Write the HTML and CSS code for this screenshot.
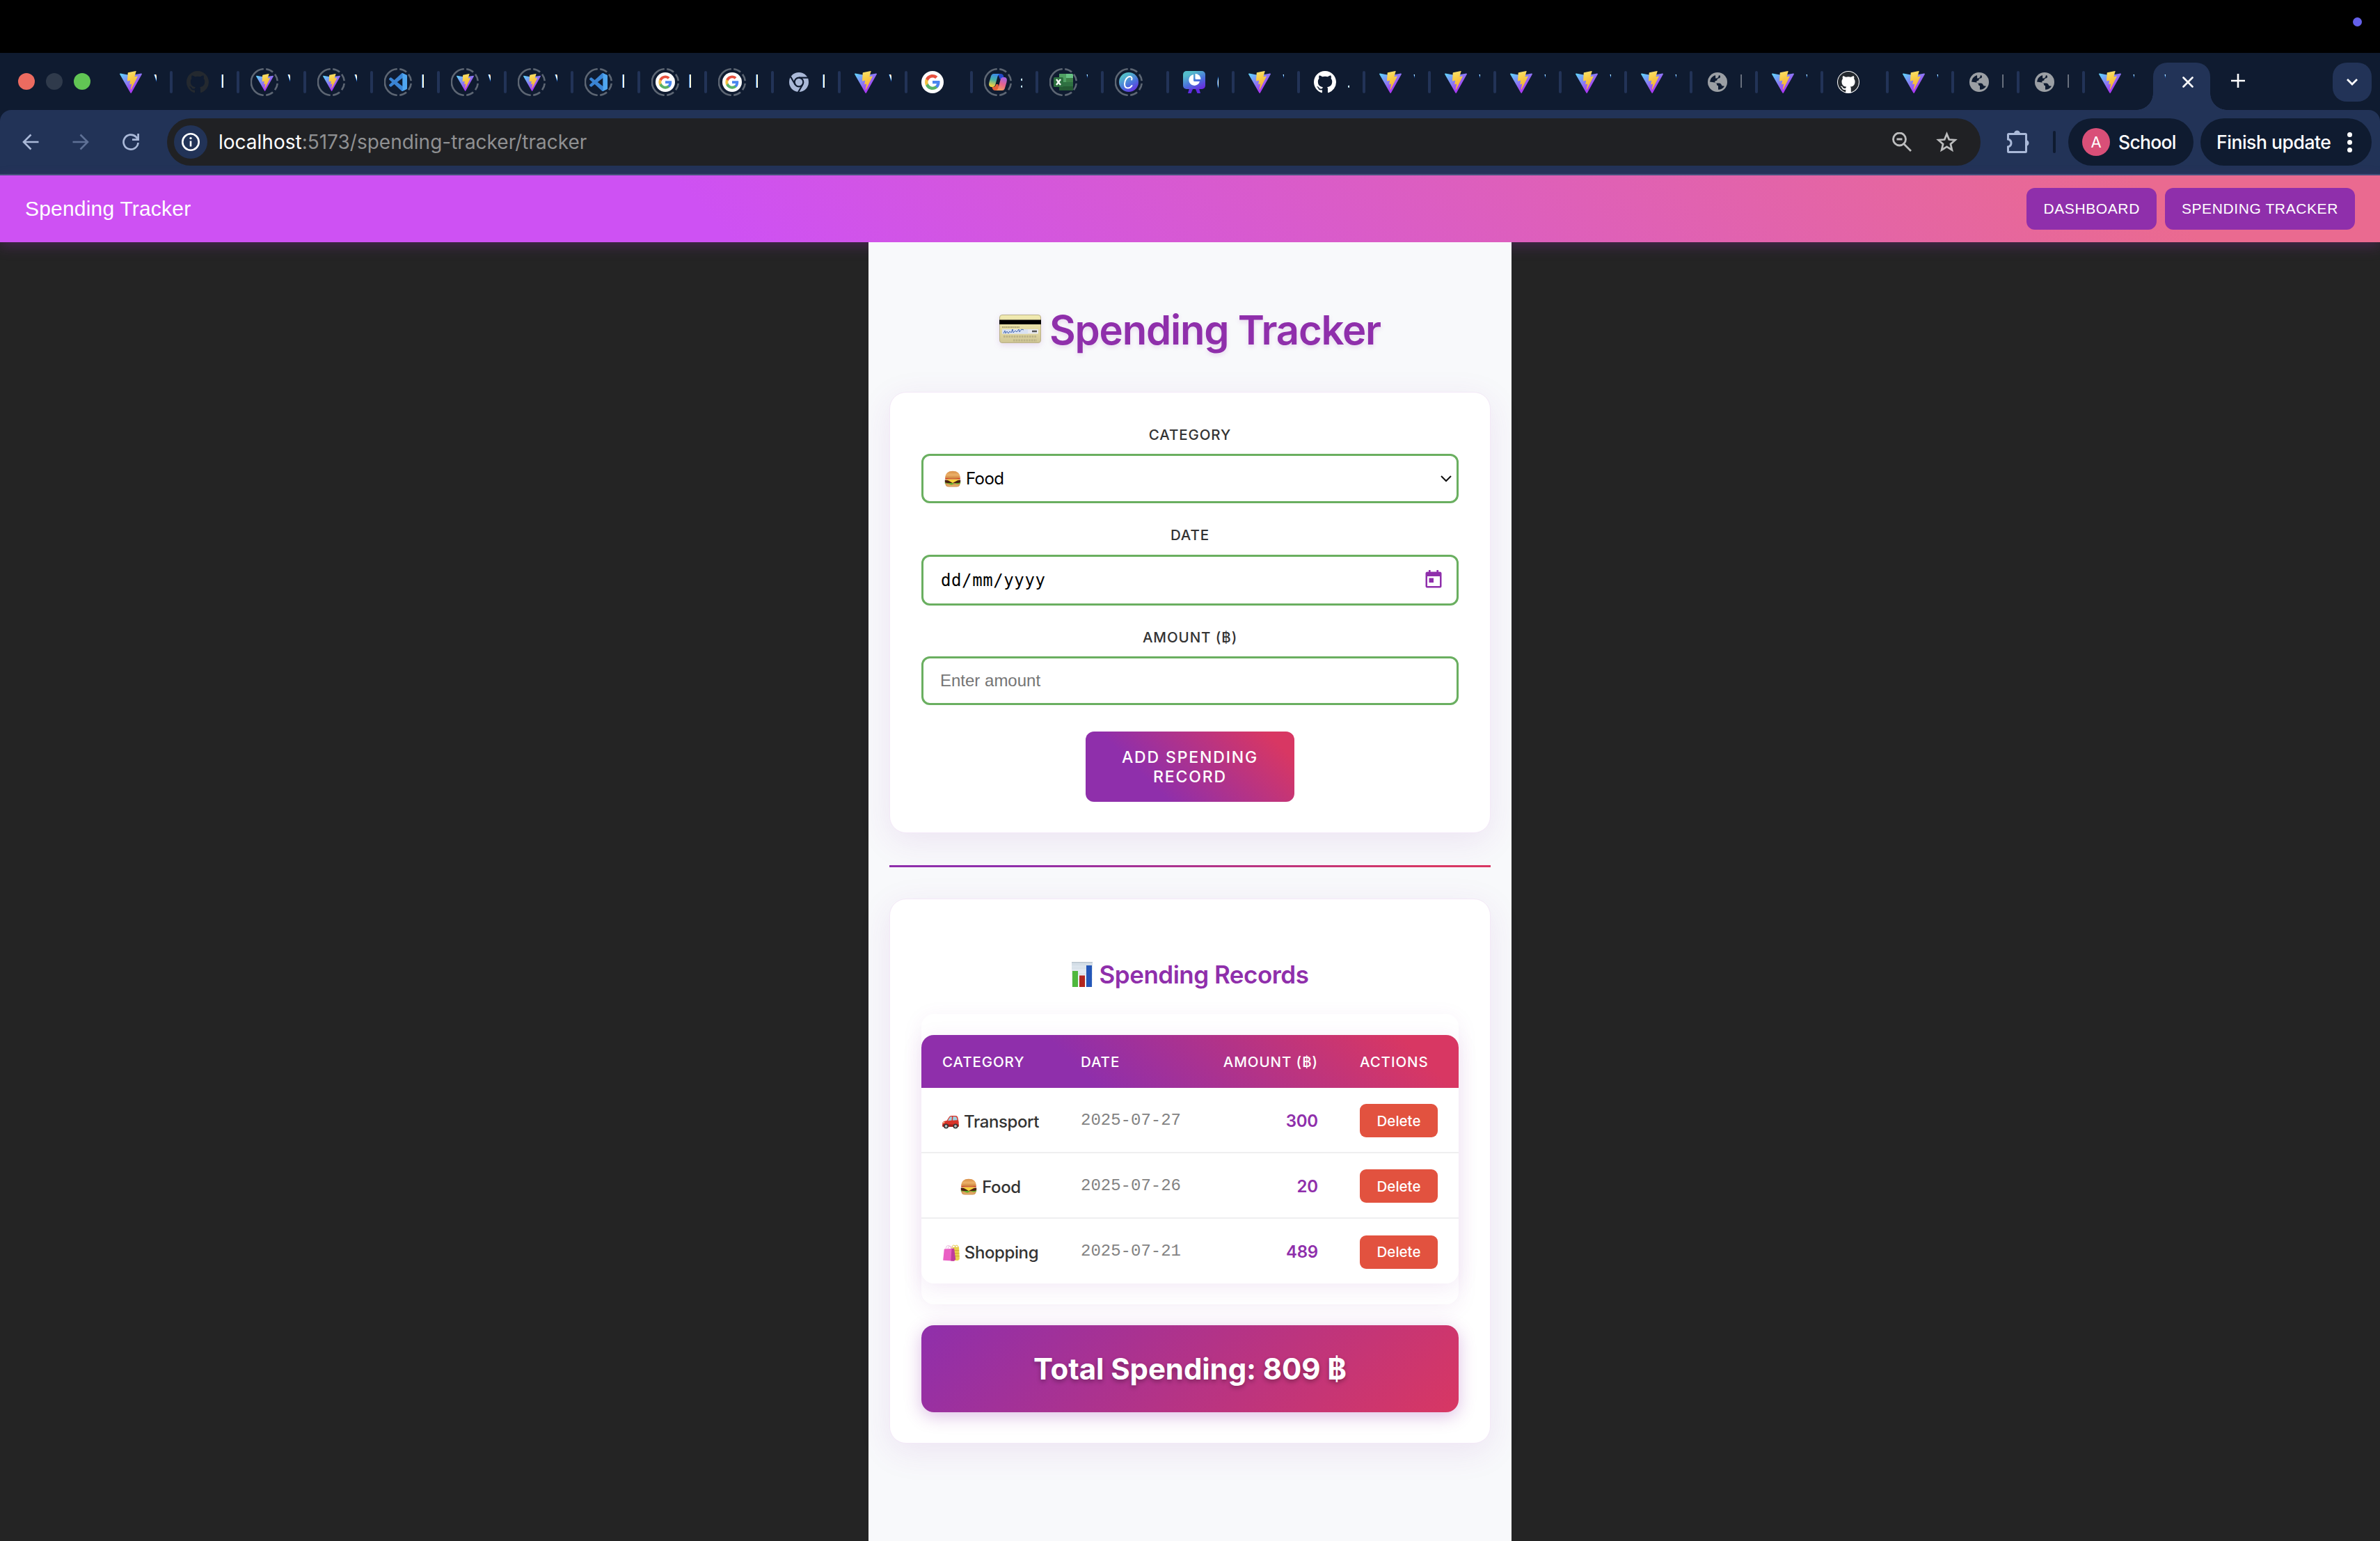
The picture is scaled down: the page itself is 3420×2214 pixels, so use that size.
FILE: index.html
```html
<!DOCTYPE html>
<html lang="en">
<head>
<meta charset="utf-8">
<title>Spending Tracker</title>
<link rel="stylesheet" href="styles.css">
</head>
<body>
<svg class="sprite" aria-hidden="true">
  <defs>
    <linearGradient id="vite-a" x1="0" y1="0.1" x2="0.6" y2="0.8"><stop offset="0" stop-color="#62cdfb"/><stop offset="1" stop-color="#a83cf2"/></linearGradient>
    <linearGradient id="vite-b" x1="0.4" y1="0" x2="0.6" y2="1"><stop offset="0" stop-color="#fbe067"/><stop offset="0.4" stop-color="#f8cb45"/><stop offset="1" stop-color="#f2ab3c"/></linearGradient>
    <linearGradient id="canva" x1="0.2" y1="0" x2="0.8" y2="1"><stop offset="0.15" stop-color="#53bccb"/><stop offset="0.6" stop-color="#4a6fdc"/><stop offset="1" stop-color="#6a2be0"/></linearGradient>
    <linearGradient id="cop-a" x1="0.5" y1="0" x2="0.3" y2="1"><stop offset="0" stop-color="#3b8be8"/><stop offset="0.45" stop-color="#47b3a8"/><stop offset="0.9" stop-color="#e8cf45"/></linearGradient>
    <linearGradient id="cop-b" x1="0.6" y1="0" x2="0.3" y2="1"><stop offset="0" stop-color="#a663e0"/><stop offset="0.5" stop-color="#e8648c"/><stop offset="1" stop-color="#f0a05c"/></linearGradient>
    <linearGradient id="card" x1="0" y1="0" x2="0" y2="1"><stop offset="0" stop-color="#f1ebb2"/><stop offset="0.5" stop-color="#e6dda4"/><stop offset="1" stop-color="#cfc595"/></linearGradient>
    <linearGradient id="bun" x1="0" y1="0" x2="0" y2="1"><stop offset="0" stop-color="#d98f48"/><stop offset="0.5" stop-color="#ebb169"/><stop offset="1" stop-color="#c97c38"/></linearGradient>
    <linearGradient id="chartbg" x1="0" y1="0" x2="0" y2="1"><stop offset="0" stop-color="#cbd6df"/><stop offset="0.2" stop-color="#dde6ee"/><stop offset="1" stop-color="#f1f5f8"/></linearGradient>
  </defs>
  <symbol id="vite" viewBox="0 0 256 257"><path fill="url(#vite-a)" d="M255.153 37.938L134.897 252.976c-2.483 4.44-8.862 4.466-11.382.048L.875 37.958c-2.746-4.814 1.371-10.646 6.827-9.67l120.385 21.517a6.537 6.537 0 0 0 2.322-.004l117.867-21.483c5.438-.991 9.574 4.796 6.877 9.62Z"/><path fill="url(#vite-b)" d="M185.432.063L96.44 17.501a3.268 3.268 0 0 0-2.634 3.014l-5.474 92.456a3.268 3.268 0 0 0 3.997 3.378l24.777-5.718c2.318-.535 4.413 1.507 3.936 3.838l-7.361 36.047c-.495 2.426 1.782 4.5 4.151 3.78l15.304-4.649c2.372-.72 4.652 1.36 4.15 3.788l-11.698 56.621c-.732 3.542 3.979 5.473 5.943 2.437l1.313-2.028l72.516-144.72c1.215-2.423-.88-5.186-3.54-4.672l-25.505 4.922c-2.396.462-4.435-1.77-3.759-4.114l16.646-57.705c.677-2.35-1.37-4.583-3.769-4.113Z"/></symbol>
  <symbol id="github" viewBox="0 0 16 16"><path fill="currentColor" d="M8 0C3.58 0 0 3.58 0 8c0 3.54 2.29 6.53 5.47 7.59.4.07.55-.17.55-.38 0-.19-.01-.82-.01-1.49-2.01.37-2.53-.49-2.69-.94-.09-.23-.48-.94-.82-1.13-.28-.15-.68-.52-.01-.53.63-.01 1.08.58 1.23.82.72 1.21 1.87.87 2.33.66.07-.52.28-.87.51-1.07-1.78-.2-3.64-.89-3.64-3.95 0-.87.31-1.59.82-2.15-.08-.2-.36-1.02.08-2.12 0 0 .67-.21 2.2.82.64-.18 1.32-.27 2-.27s1.36.09 2 .27c1.53-1.04 2.2-.82 2.2-.82.44 1.1.16 1.92.08 2.12.51.56.82 1.27.82 2.15 0 3.07-1.87 3.75-3.65 3.95.29.25.54.73.54 1.48 0 1.07-.01 1.93-.01 2.2 0 .21.15.46.55.38A8.01 8.01 0 0 0 16 8c0-4.42-3.58-8-8-8Z"/></symbol>
  <symbol id="vscode" viewBox="0 0 24 24"><path fill="#3a84d4" d="M23.15 2.587L18.21.21a1.494 1.494 0 0 0-1.705.29l-9.46 8.63-4.12-3.128a.999.999 0 0 0-1.276.057L.327 7.261A1 1 0 0 0 .326 8.74L3.899 12 .326 15.26a1 1 0 0 0 .001 1.479L1.65 17.94a.999.999 0 0 0 1.276.057l4.12-3.128 9.46 8.63a1.492 1.492 0 0 0 1.704.29l4.942-2.377A1.5 1.5 0 0 0 24 20.06V3.939a1.5 1.5 0 0 0-.85-1.352zm-5.146 14.861L10.826 12l7.178-5.448v10.896z"/><path fill="#4fa6f0" d="M18.21.21l4.94 2.377A1.5 1.5 0 0 1 24 3.94v16.12a1.5 1.5 0 0 1-.85 1.352l-4.94 2.377q-.5.2-1 0 .8-.3.8-1.3V1.5q0-1-.8-1.35.5-.15 1 .06z"/></symbol>
  <symbol id="google" viewBox="0 0 32 32"><circle cx="16" cy="16" r="16" fill="#fff"/><g transform="translate(4 4)"><path fill="#4a86f0" d="M22.56 12.25c0-.78-.07-1.53-.2-2.25H12v4.26h5.92c-.26 1.37-1.04 2.53-2.21 3.31v2.77h3.57c2.08-1.92 3.28-4.74 3.28-8.09z"/><path fill="#58b368" d="M12 23c2.97 0 5.46-.98 7.28-2.66l-3.57-2.77c-.98.66-2.23 1.06-3.71 1.06-2.86 0-5.29-1.93-6.16-4.53H2.18v2.84C3.99 20.53 7.7 23 12 23z"/><path fill="#f3c041" d="M5.84 14.09c-.22-.66-.35-1.36-.35-2.09s.13-1.43.35-2.09V7.07H2.18C1.43 8.55 1 10.22 1 12s.43 3.45 1.18 4.93l2.85-2.22.81-.62z"/><path fill="#e8513f" d="M12 5.38c1.62 0 3.06.56 4.21 1.64l3.15-3.15C17.45 2.09 14.97 1 12 1 7.7 1 3.99 3.47 2.18 7.07l3.66 2.84c.87-2.6 3.3-4.53 6.16-4.53z"/></g></symbol>
  <symbol id="chrome" viewBox="0 0 28 28"><circle cx="14" cy="14" r="14" fill="#aab9d8"/><g fill="none" stroke="#0f1b30" stroke-width="2.2"><circle cx="14" cy="14" r="6.3"/><path d="M14 7.7H27M8.5 17.2 2 6M19.5 17.2 13 28.5"/></g></symbol>
  <symbol id="copilot" viewBox="0 0 28 28"><path fill="#2348c8" d="M12 2h6q3 0 4 3l1.500 5H17l-2-5z"/><path fill="url(#cop-a)" d="M8 2h9q-2.500.5-3.500 4l-3 11q-1 4-4 4H4Q0 20 1.500 14L4 5.500Q5 2 8 2z"/><path fill="#e5603a" d="M16 26h-6q-3 0-4-3l-.6-2h2q3 0 4-4h3z"/><path fill="url(#cop-b)" d="M20 26h-9q2.500-.5 3.500-4l3-11q1-4 4-4H24q4 1 2.500 7L24 22.500Q23 26 20 26z"/></symbol>
  <symbol id="excel" viewBox="0 0 28 28"><path fill="#4f9f63" d="M8 2h18q2 0 2 2v20q0 2-2 2H8z"/><path fill="#68c184" d="M18 2h8q2 0 2 2v4H18z"/><path fill="#2f7041" d="M8 14h20v6H8z"/><path fill="#245a33" d="M8 20h20v4q0 2-2 2H8z"/><path fill="#3d8149" d="M18 8h10v6H18z"/><rect x="0" y="7" width="14" height="14" rx="1.500" fill="#2d7040"/><path stroke="#fff" stroke-width="2.200" d="M4 10l6 8M10 10l-6 8"/></symbol>
  <symbol id="canvac" viewBox="0 0 28 28"><circle cx="14" cy="14" r="14" fill="url(#canva)"/><path d="M18.200 10.500c1-2-.2-4.500-2.700-4.500-4 0-7.500 5.500-7.500 10.500 0 3.500 1.800 6 4.800 6 2.600 0 4.400-1.500 5.700-3.500" fill="none" stroke="#fff" stroke-width="2" stroke-linecap="round"/></symbol>
  <symbol id="present" viewBox="0 0 32 32"><path d="M9 25l-2 7h4.500L14 26h4l2.500 6H25l-2-7z" fill="#5f2ce0"/><rect width="32" height="26" rx="5" fill="url(#canva)"/><path fill="#fff" d="M15 5v8.500q0 1.500 1.500 1.500h7.500A8 8 0 1 1 15 5z"/><path fill="#fff" d="M17.500 4a8 8 0 0 1 8 8h-6.500q-1.500 0-1.500-1.500z"/></symbol>
  <symbol id="globe" viewBox="0 0 28 28"><circle cx="14" cy="14" r="14" fill="#9b9fa4"/><path fill="#0f1b30" d="M11 4q-7 2.500-8 9.500l7 1q3 .5 3 3 0 1.500 2 1.800v5.500q6 0 9-5l-3.500-.5q-1.500-3.500-3.500-3.800h-5q-1.800 0-1.800-1.700 0-1.800 1.800-1.800 1.700-.2 1.700-2 .2-1.500 2-1.500 2.500-.2 2.300-3L17 4q-1 0-2 1.500-1.500 1.500-3 1-1.500-.5-1-2.500z"/><path fill="#9b9fa4" d="M11.500 4.500h4q.5 2-1.500 3.500-1 .8-3 .3z"/></symbol>
  <symbol id="ring" viewBox="0 0 40 40"><g fill="none" stroke="#5d6673" stroke-width="2.600"><path d="M17.700 1.300a18.800 18.800 0 0 0 0 37.400" stroke-linecap="round"/><path d="M20 1.200a18.800 18.800 0 0 1 0 37.600" pathLength="180" stroke-dasharray="0 7 33 13 31 12 31 13 33 7"/></g></symbol>
  <symbol id="burger" viewBox="0 0 24 24"><path fill="#c88a4a" d="M1.500 17.500h21v2.500q-1 3.500-5 3.500h-11q-4 0-5-3.500z"/><path fill="#e2a864" d="M2 19.500h20q-1 3-4.500 3.200h-11Q3 22.500 2 19.500z"/><path fill="#63b12e" d="M.8 16.500q3 2 5.500.8t5.500.8 5.700-.6 5.700-1v2q-3 1.500-5.500.8t-5.700.6-5.700-.6-5.500-.4z"/><path fill="#4a2010" d="M.8 13.500h22.400v3q-1.200 1.500-4 1.500H4.800q-3 0-4-1.500z"/><path fill="#f6d33c" d="M1 12.500h22l-4.500 2-6.500 3.500L6 14.500z"/><path fill="#cf3a22" d="M1.200 10.500h21.600v2H1.200z"/><path fill="url(#bun)" d="M1 10.500Q1.500.8 12 .8T23 10.500q-5 1.300-11 1.300T1 10.500z"/></symbol>
  <symbol id="car" viewBox="0 0 24 20"><path fill="#d9342a" d="M.3 11q.4-1.500 3-2.200L6.500 8 10 2.500Q10.800 1 13 .9h6q2.500 0 3.200 2L23.500 9q.4 1 .2 3.500v3.200q0 1-1 1H1.300q-1 0-1-1z"/><path fill="#9fd0e0" d="M7.800 8.200l3-5q.6-1 2-1H14l-.5 5.500zM15.500 2.200h3q1.800 0 2.300 1.500l1 3.500-6.800.5z"/><path fill="#a81f1a" d="M.3 13.500h23.400v2.800q0 .7-1 .7H1.300q-1 0-1-.7z"/><path fill="#f7e6a0" d="M1 10.500l2.500-.8-.4 1.600-2.300.5z"/><circle cx="5.500" cy="16" r="3.500" fill="#333"/><circle cx="5.500" cy="16" r="1.900" fill="#b7bcc0"/><circle cx="19" cy="16" r="3.500" fill="#333"/><circle cx="19" cy="16" r="1.900" fill="#b7bcc0"/></symbol>
  <symbol id="bags" viewBox="0 0 24 24"><path fill="none" stroke="#e3c43f" stroke-width="1" d="M13 5.500Q13 1 15.500 1T18 4.500M17 4Q18 .6 20 1t2 3.500"/><path fill="#e9cf4c" d="M11 4l12-.5.8 17.500-2 2H11z"/><path fill="#cfae30" d="M11 8h12.200v1.200H11zm0 4h12.400v1.200H11zm0 4h12.600v1.200H11z"/><path fill="none" stroke="#eec3e2" stroke-width="1.100" d="M4 7q.5-5.500 3.500-5.500T12 7M7 6Q8 2 10.500 2.500T14 7"/><path fill="#ea5fc4" d="M1.800 6.500l14.200-.7.8 18L.2 22.800z"/><path fill="#bf3b9c" d="M12.500 6l3.500-.2 2.300 15.700-3 2.300-4-.2z"/></symbol>
  <symbol id="creditcard" viewBox="0 0 60 42"><rect x=".5" y=".5" width="59" height="40" rx="3.500" fill="url(#card)" stroke="#b9b08a"/><path fill="#000" d="M0 7.500h60v6.500H0z"/><path fill="#e9eaf0" d="M4 21h52v6.500H4z"/><path fill="#d9e2f2" d="M4 21h37v6.500H4z"/><path d="M4 18h25" stroke="#77714f" stroke-width="1.200" stroke-dasharray="2 .6"/><path d="M6 27l2-4 1 4 2-3 2 3 2-3 2 2 2-5 1 5 3-3 2 2 3-4 1 4 3-4 3 1" fill="none" stroke="#4668b4" stroke-width="1"/><path d="M47 24h7" stroke="#555" stroke-width="2.500"/><path d="M6 31.500h48M20 37h34" stroke="#bcb389" stroke-width="3" stroke-dasharray="2.500 1.200"/></symbol>
  <symbol id="chart" viewBox="0 0 30 36"><rect width="30" height="36" fill="url(#chartbg)"/><path d="M0 .5h30" stroke="#b4c0ca"/><path d="M0 9h30M0 17h30M0 25h30" stroke="#cfd9e1" stroke-width=".8"/><rect x="1" y="13" width="8" height="23" fill="#4fb83e"/><rect x="11" y="19.500" width="8" height="16.500" fill="#b3261e"/><rect x="21" y="5" width="8" height="31" fill="#2457b8"/></symbol>
</svg>

<div class="menubar"><span class="menubar-dot"></span></div>

<header class="browser">
  <div class="tabstrip">
    <div class="lights"><i class="light red"></i><i class="light gray"></i><i class="light green"></i></div>
    <div class="tabs" id="tabs"></div>
    <div class="tab-active">
      <span class="frag narrow">V</span>
      <svg class="close" viewBox="0 0 16 16"><path d="M1.500 1.500l13 13M14.500 1.500l-13 13" stroke="#fff" stroke-width="2.600" stroke-linecap="round"/></svg>
    </div>
    <svg class="newtab" viewBox="0 0 20 20"><path d="M10 0v20M0 10h20" stroke="#fff" stroke-width="2.600"/></svg>
    <div class="tabsearch"><svg viewBox="0 0 18 12"><path d="M2 2l7 7 7-7" fill="none" stroke="#fff" stroke-width="2.800"/></svg></div>
  </div>
  <div class="toolbar">
    <svg class="nav" viewBox="0 0 24 24"><path d="M23.500 12H2M12.500 1.500L2 12l10.500 10.500" fill="none" stroke="#aab9d8" stroke-width="2.600"/></svg>
    <svg class="nav" viewBox="0 0 24 24"><path d="M.5 12H22M11.500 1.500L22 12 11.500 22.500" fill="none" stroke="#5f7196" stroke-width="2.600"/></svg>
    <svg class="nav" viewBox="0 0 24 24"><path d="M22.500 13a10.500 10.500 0 1 1-3.200-8.500L22.500 8" fill="none" stroke="#aab9d8" stroke-width="2.700"/><path d="M22.600 0v8.600H14" fill="none" stroke="#aab9d8" stroke-width="2.700"/></svg>
    <div class="omnibox">
      <span class="site"><svg viewBox="0 0 26 26"><circle cx="13" cy="13" r="11.700" fill="none" stroke="#fff" stroke-width="2.600"/><path d="M13 11.500v8" stroke="#fff" stroke-width="2.600"/><circle cx="13" cy="7.600" r="1.700" fill="#fff"/></svg></span>
      <span class="url"><b>localhost</b>:5173/spending-tracker/tracker</span>
      <svg class="mag" viewBox="0 0 28 28"><circle cx="10.500" cy="10" r="9" fill="none" stroke="#bdbebf" stroke-width="2.800"/><path d="M17 17l10 10M6.500 10h8" stroke="#bdbebf" stroke-width="2.800"/></svg>
      <svg class="star" viewBox="0 0 31 30"><path d="M15.500 3.500l3.300 8 8.700.7-6.600 5.700 2 8.500-7.400-4.500-7.400 4.500 2-8.500-6.600-5.700 8.700-.7z" fill="none" stroke="#bdbebf" stroke-width="2.700"/></svg>
    </div>
    <svg class="puzzle" viewBox="0 0 34 34"><path d="M4.500 5.500h24a1 1 0 0 1 1 1v24a1 1 0 0 1-1 1h-24a1 1 0 0 1-1-1v-6.500q4.500-1.200 4.500-5.500t-4.500-5.500V6.500a1 1 0 0 1 1-1z" fill="none" stroke="#aab9d8" stroke-width="3"/><path d="M12 5a4.500 4.500 0 0 1 9 0zM29 14a4.500 4.500 0 0 1 0 9z" fill="#aab9d8"/></svg>
    <i class="divider"></i>
    <div class="pill profile"><span class="avatar">A</span><span class="pilltext school">School</span></div>
    <div class="pill update"><span class="pilltext">Finish update</span><span class="dots"><i></i><i></i><i></i></span></div>
  </div>
</header>

<nav class="appbar">
  <div class="brand">Spending Tracker</div>
  <a class="navbtn">DASHBOARD</a>
  <a class="navbtn">SPENDING TRACKER</a>
</nav>

<main class="page">
  <h1><svg><use href="#creditcard"/></svg><span>Spending Tracker</span></h1>
  <section class="card form">
    <label>CATEGORY</label>
    <div class="field select"><svg class="emoji"><use href="#burger"/></svg><span>Food</span><svg class="chev" viewBox="0 0 16 10"><path d="M1 1l7 7 7-7" fill="none" stroke="#111" stroke-width="2"/></svg></div>
    <label class="datelabel">DATE</label>
    <div class="field date"><span>dd/mm/yyyy</span><svg class="cal" viewBox="0 0 24 26"><path fill="#8f2fab" d="M3 2.500h2V0h2.600v2.500h8.800V0H19v2.500h2q2.500 0 2.500 2.500v18q0 2.500-2.500 2.500H3Q.5 25.500.5 23V5Q.5 2.500 3 2.500zM3 9v14h18V9zM5.500 11.500H12V18H5.500z" fill-rule="evenodd"/></svg></div>
    <label>AMOUNT (฿)</label>
    <div class="field amount"><span>Enter amount</span></div>
    <button class="add">ADD SPENDING<br>RECORD</button>
  </section>
  <hr>
  <section class="card records">
    <h2><svg><use href="#chart"/></svg><span>Spending Records</span></h2>
    <div class="tablewrap">
      <table>
        <colgroup><col class="c1"><col class="c2"><col class="c3"><col class="c4"></colgroup>
        <thead><tr><th>CATEGORY</th><th>DATE</th><th class="r">AMOUNT (฿)</th><th>ACTIONS</th></tr></thead>
        <tbody>
          <tr><td><div class="cat"><svg class="emoji car"><use href="#car"/></svg><span>Transport</span></div></td><td class="when">2025-07-27</td><td class="num">300</td><td><button class="del">Delete</button></td></tr>
          <tr><td><div class="cat"><svg class="emoji"><use href="#burger"/></svg><span>Food</span></div></td><td class="when">2025-07-26</td><td class="num">20</td><td><button class="del">Delete</button></td></tr>
          <tr><td><div class="cat"><svg class="emoji"><use href="#bags"/></svg><span>Shopping</span></div></td><td class="when">2025-07-21</td><td class="num">489</td><td><button class="del">Delete</button></td></tr>
        </tbody>
      </table>
    </div>
    <div class="total">Total Spending: 809 ฿</div>
  </section>
</main>
<script src="tabs.js"></script>
</body>
</html>
```
FILE: styles.css
```css
* { box-sizing: border-box; }
html, body { height: 100%; }
body { margin: 0; background: #242424; font-family: Inter, "Liberation Sans", sans-serif; color: #333; overflow: hidden; }
svg { display: block; flex: none; }
i { font-style: normal; }
.sprite { position: absolute; width: 0; height: 0; }

.menubar { height: 76px; background: #000; display: flex; justify-content: flex-end; padding: 25px 26px 0 0; }
.menubar-dot { width: 13px; height: 13px; border-radius: 50%; background: #6460ea; }

/* Browser chrome */
.browser { background: #0f1b30; }
.tabstrip { height: 82px; display: flex; align-items: flex-start; }
.lights { display: flex; gap: 16px; padding: 29px 0 0 26px; width: 150px; flex: none; }
.light { width: 24px; height: 24px; border-radius: 50%; }
.red { background: #ec6b60; }
.gray { background: #2f3a4b; }
.green { background: #61c554; }
.tabs { display: flex; height: 82px; }
.tab { width: 94px; height: 84px; display: flex; align-items: center; padding-left: 18px; flex: none; }
.tab.wide { width: 96px; }
.fav { width: 40px; height: 40px; display: grid; place-items: center; flex: none; }
.fav > * { grid-area: 1 / 1; }
.s32 { width: 32px; height: 32px; }
.s28 { width: 28px; height: 28px; }
.s26 { width: 26px; height: 26px; }
.s25 { width: 25px; height: 25px; }
.s40 { width: 40px; height: 40px; }
.frag { display: block; width: 4px; height: 24px; margin: -2px 0 0 13px; overflow: hidden; color: #fff; font-size: 25px; line-height: 24px; }
.frag.stem { text-indent: -.500px; }
.frag.narrow { width: 2px; }
.frag.narrow.stem { text-indent: -2px; }
.frag.faint { opacity: .4; }
.sep { width: 4px; height: 32px; border-radius: 2px; background: #223357; margin: 0 -2px 0 auto; }
.tab-active { position: relative; width: 82px; height: 68px; margin: 14px 0 0 6px; background: #223357; border-radius: 20px 20px 0 0; display: flex; align-items: center; padding-left: 2px; }
.tab-active::before, .tab-active::after { content: ""; position: absolute; bottom: 0; width: 24px; height: 24px; }
.tab-active::before { left: -24px; background: radial-gradient(circle at 0 0, transparent 23.500px, #223357 24px); }
.tab-active::after { right: -24px; background: radial-gradient(circle at 100% 0, transparent 23.500px, #223357 24px); }
.tab-active .frag { margin: -14px 0 0 14px; }
.close { width: 16px; height: 16px; margin: -12px 0 0 24px; }
.newtab { width: 20px; height: 20px; margin: 30px 0 0 30px; }
.tabsearch { width: 56px; height: 56px; border-radius: 20px; background: #223357; margin: 14px 12px 0 auto; display: grid; place-items: center; }
.tabsearch svg { width: 18px; height: 12px; }

.toolbar { height: 94px; background: #223357; border-bottom: 2px solid #42547a; border-radius: 16px 16px 0 0; display: flex; align-items: center; padding: 0 12px 0 32px; }
.nav { width: 24px; height: 24px; margin-right: 48px; }
.omnibox { width: 2606px; height: 68px; border-radius: 34px; background: #202124; margin-left: -8px; display: flex; align-items: center; padding: 0 33px 0 10px; }
.site { width: 48px; height: 48px; border-radius: 50%; background: #223357; display: grid; place-items: center; }
.site svg { width: 26px; height: 26px; }
.url { margin-left: 16px; font-size: 28px; color: #8f9092; white-space: nowrap; }
.url b { font-weight: 400; color: #fff; }
.mag { width: 28px; height: 28px; margin-left: auto; }
.star { width: 31px; height: 30px; margin-left: 35px; }
.puzzle { width: 34px; height: 34px; margin-left: 36px; }
.divider { width: 4px; height: 32px; border-radius: 2px; background: #0f1b30; margin: 0 18px 0 34px; }
.pill { height: 68px; border-radius: 34px; background: #0f1b30; color: #fff; display: flex; align-items: center; font-size: 26.500px; font-weight: 500; flex: none; white-space: nowrap; letter-spacing: -.450px; }
.profile { width: 180px; padding-left: 20px; }
.school { letter-spacing: -.700px; }
.avatar { width: 40px; height: 40px; border-radius: 50%; background: #d94f78; font-size: 22px; line-height: 40px; text-align: center; font-weight: 400; margin-right: 12px; letter-spacing: 0; }
.update { width: 246px; margin-left: 10px; padding-left: 23px; }
.dots { display: grid; gap: 4px; margin: 0 28px 0 auto; }
.dots i { width: 7px; height: 7px; border-radius: 50%; background: #fff; }

/* App bar */
.appbar { height: 96px; display: flex; align-items: center; gap: 12px; padding: 0 36px; background: linear-gradient(45deg, #ce51f3 30%, #ea6a90 90%); box-shadow: 0 6px 18px rgba(142, 46, 168, .3); font-family: "Liberation Sans", Arial, sans-serif; color: #fff; }
.brand { font-size: 30px; letter-spacing: .200px; margin-right: auto; }
.navbtn { height: 60px; padding: 0 24px; border-radius: 12px; background: #8f2fab; font-size: 21px; line-height: 60px; letter-spacing: .600px; }

/* Page column */
.page { width: 924px; height: 1866px; margin: 0 auto; padding: 90px 30px 0; background: #f8f9fb; }
h1, h2 { margin: 0; color: #8f2fab; font-weight: 600; display: flex; justify-content: center; align-items: center; white-space: nowrap; }
h1 { height: 72px; font-size: 58px; line-height: 72px; margin-bottom: 53px; gap: 12px; text-shadow: 0 3px 6px rgba(142, 46, 168, .15); letter-spacing: -1.200px; }
h1 svg { width: 60px; height: 42px; margin-top: -3px; filter: drop-shadow(0 3px 4px rgba(142, 46, 168, .15)); }
.card { background: #fff; border: 1px solid #f3e8f7; border-radius: 24px; box-shadow: 0 12px 48px rgba(142, 46, 168, .1); padding: 45px; }
.form { height: 634px; }
label { display: block; height: 31px; line-height: 31px; margin-bottom: 12px; text-align: center; font-size: 20.500px; font-weight: 550; letter-spacing: .900px; }
.datelabel { margin-bottom: 13px; }
.field { border: 3px solid #6aaf60; border-radius: 12px; display: flex; align-items: center; margin-bottom: 30px; font-size: 24px; color: #000; background: #fff; }
.select { height: 71px; padding: 0 7px 0 30px; letter-spacing: -.600px; }
.emoji { width: 24px; height: 24px; margin-right: 7px; }
.car { height: 20px; margin-top: 2px; }
.chev { width: 16px; height: 10px; margin-left: auto; }
.date { height: 73px; padding: 0 21px 0 25px; font-family: "DejaVu Sans Mono", monospace; letter-spacing: .600px; }
.cal { width: 24px; height: 26px; margin: -4px 0 0 auto; }
.amount { height: 70px; padding: 0 24px; font-family: "Liberation Sans", Arial, sans-serif; color: #757575; }
button { border: 0; padding: 0; color: #fff; font-family: inherit; display: block; }
.add { width: 300px; height: 101px; margin: 38px auto 0; border-radius: 12px; background: linear-gradient(45deg, #8f2fab 30%, #d83763 90%); font-size: 23px; line-height: 28px; font-weight: 550; letter-spacing: 1.850px; }
hr { height: 3px; border: 0; margin: 46px 0 45px; background: linear-gradient(90deg, #8f2fab 20%, #d83763 90%); }
.records { height: 783px; }
h2 { height: 44px; margin: 41px 0 35px; font-size: 35px; line-height: 44px; gap: 10px; letter-spacing: -.500px; }
h2 svg { width: 30px; height: 36px; }
.tablewrap { padding: 30px 0; border-radius: 18px; box-shadow: 0 6px 30px rgba(142, 46, 168, .08); }
table { width: 772px; table-layout: fixed; border-collapse: separate; border-spacing: 0; border-radius: 18px; overflow: hidden; background: #fff; box-shadow: 0 6px 30px rgba(142, 46, 168, .1); }
.c1 { width: 199px; } .c2 { width: 202px; } .c3 { width: 199px; } .c4 { width: 172px; }
thead { background: linear-gradient(45deg, #8f2fab 30%, #d83763 90%); }
th { height: 76px; padding: 0 0 0 30px; text-align: left; color: #fff; font-size: 20.500px; font-weight: 550; letter-spacing: .900px; white-space: nowrap; }
th.r { text-align: right; padding: 0 30px 0 0; }
td { height: 94px; padding: 2px 30px 0; border-bottom: 2px solid #efeff0; white-space: nowrap; }
tr:last-child td { border-bottom: 0; height: 93px; }
.cat { display: flex; align-items: center; justify-content: center; font-size: 24px; font-weight: 500; margin-top: 2px; letter-spacing: -.400px; }
.when { padding: 0 0 0 30px; font-family: "Liberation Mono", "Courier New", monospace; font-size: 24px; color: #838383; }
.num { text-align: right; color: #8f2fab; font-size: 24px; font-weight: 600; letter-spacing: -.200px; }
.del { width: 112px; height: 48px; border-radius: 9px; background: #e2523f; font-size: 20.500px; font-weight: 500; }
.total { height: 125px; margin-top: 30px; border-radius: 18px; background: linear-gradient(135deg, #8f2fab, #d83763); box-shadow: 0 6px 24px rgba(142, 46, 168, .3); color: #fff; font-size: 42px; font-weight: 700; line-height: 125px; text-align: center; text-shadow: 0 3px 6px rgba(0, 0, 0, .3); letter-spacing: -.100px; }
```
FILE: tabs.js
```js
// Open tabs, in order: [icon, title, ring?, colour]
const open = [
  ['vite', 'V'], ['github', 'L', 0, '#24292f'], ['vite', 'V', 1], ['vite', 'V', 1], ['vscode', 'L', 1],
  ['vite', 'V', 1], ['vite', 'V', 1], ['vscode', 'L', 1], ['google', 'L', 1], ['google', 'L', 1],
  ['chrome', 'L'], ['vite', 'V'], ['google', ''], ['copilot', ':', 1], ['excel', 'V', 1], ['canvac', '', 1],
  ['present', '('], ['vite', 'V'], ['github', '.', 0, '#fff'], ['vite', 'V'], ['vite', 'V'], ['vite', 'V'],
  ['vite', 'V'], ['vite', 'V'], ['globe', 'L'], ['vite', 'V'], ['octo', ''], ['vite', 'V'], ['globe', 'L'],
  ['globe', 'L'], ['vite', 'V'],
];
document.getElementById('tabs').innerHTML = open.map(([icon, title, ring, color], i) => {
  const size = ring ? (icon === 'vite' ? 's25' : icon === 'vscode' ? 's26' : 's28') : (icon === 'chrome' || icon === 'globe' ? 's28' : 's32');
  const use = icon === 'octo'
    ? '<svg class="s32" viewBox="0 0 32 32"><circle cx="16" cy="16" r="16" fill="#fff"/><g color="#24292f"><use href="#github" x="1" y="1" width="30" height="30"/></g></svg>'
    : `<svg class="${size}"${color ? ` color="${color}"` : ''}><use href="#${icon}"/></svg>`;
  const frag = ['frag', i < 12 ? '' : 'narrow', title === 'V' ? '' : 'stem', icon === 'globe' ? 'faint' : ''].filter(Boolean).join(' ');
  return `<div class="tab${i < 12 ? ' wide' : ''}"><span class="fav">${ring ? '<svg class="s40"><use href="#ring"/></svg>' : ''}${use}</span>` +
    `${title ? `<span class="${frag}">${title}</span>` : ''}${i < 30 ? '<i class="sep"></i>' : ''}</div>`;
}).join('');
```
